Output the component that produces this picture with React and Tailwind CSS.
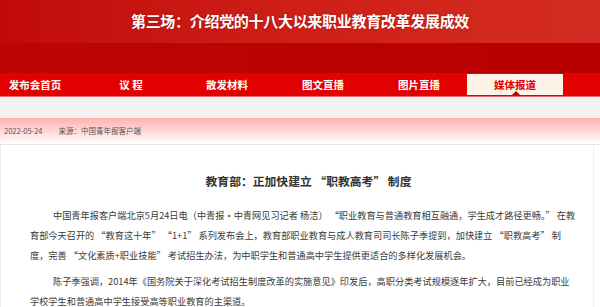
import React from "react";

const navItems = ["发布会首页", "议 程", "散发材料", "图文直播", "图片直播", "媒体报道"];

const App = () => {
    return (
        <div
            className="w-[600px] h-[307px] overflow-hidden bg-white"
            style={{ fontFamily: '"Noto Sans CJK SC", "Liberation Sans", sans-serif' }}
        >
            {/* banner */}
            <div className="h-[73px] flex flex-col">
                <div className="h-[43px] flex items-center justify-center bg-gradient-to-r from-[#c00a0a] via-[#cf1f16] to-[#d42c22]">
                    <h1 className="text-[15px] font-bold text-white tracking-[-0.3px] [text-shadow:0_0_2px_rgba(120,0,0,0.6)]">
                        第三场：介绍党的十八大以来职业教育改革发展成效
                    </h1>
                </div>
                <div className="flex-1 bg-gradient-to-r from-[#bf0404] to-[#b80000]"></div>
            </div>

            {/* nav */}
            <nav className="h-[24px] bg-[#e20000] border-b border-[#f26a6a] flex ml-[-13px]">
                {navItems.map((item, i) =>
                    i === navItems.length - 1 ? (
                        <div key={item} className="relative w-[96px] h-[21px] mt-[1px] bg-[#fdf3e9] flex items-center justify-center">
                            <span className="text-[10.5px] font-bold text-[#e00000]">{item}</span>
                            <span className="absolute bottom-0 left-[45px] w-0 h-0 border-l-[4px] border-r-[4px] border-b-[4px] border-l-transparent border-r-transparent border-b-[#c00000]"></span>
                        </div>
                    ) : (
                        <div key={item} className="w-[96px] flex items-center justify-center">
                            <span className="text-[10.5px] font-bold text-white">{item}</span>
                        </div>
                    )
                )}
            </nav>

            <div className="h-[21px] bg-[#f2f2f2]"></div>

            {/* date bar */}
            <div className="h-[27px] bg-gradient-to-b from-[#ffb0b0] to-white border-b border-[#e6e6ec] flex items-center gap-[16px] pl-[4px] text-[7.5px] text-[#555]">
                <span>2022-05-24</span>
                <span>来源：中国青年报客户端</span>
            </div>

            {/* article */}
            <div className="w-[594px] border-l border-r border-[#eeeeee] pl-[29px] pr-[10px] pt-[28px] text-[#3a3a3a]">
                <h2 className="text-center text-[11.8px] font-bold leading-[16px] text-[#333] pl-[4px]">
                    教育部：正加快建立 “职教高考” 制度
                </h2>
                <div className="mt-[16px] text-[9.2px] leading-[20px]">
                    <p className="indent-[23px]">
                        中国青年报客户端北京5月24日电（中青报·中青网见习记者 杨洁） “职业教育与普通教育相互融通，学生成才路径更畅。” 在教<br />
                        育部今天召开的 “教育这十年” “1+1” 系列发布会上，教育部职业教育与成人教育司司长陈子季提到，加快建立 “职教高考” 制<br />
                        度，完善 “文化素质+职业技能” 考试招生办法，为中职学生和普通高中学生提供更适合的多样化发展机会。
                    </p>
                    <p className="indent-[23px] mt-[6px]">
                        陈子季强调，2014年《国务院关于深化考试招生制度改革的实施意见》印发后，高职分类考试规模逐年扩大，目前已经成为职业<br />
                        学校学生和普通高中学生接受高等职业教育的主渠道。
                    </p>
                </div>
            </div>
        </div>
    );
};

export default App;
